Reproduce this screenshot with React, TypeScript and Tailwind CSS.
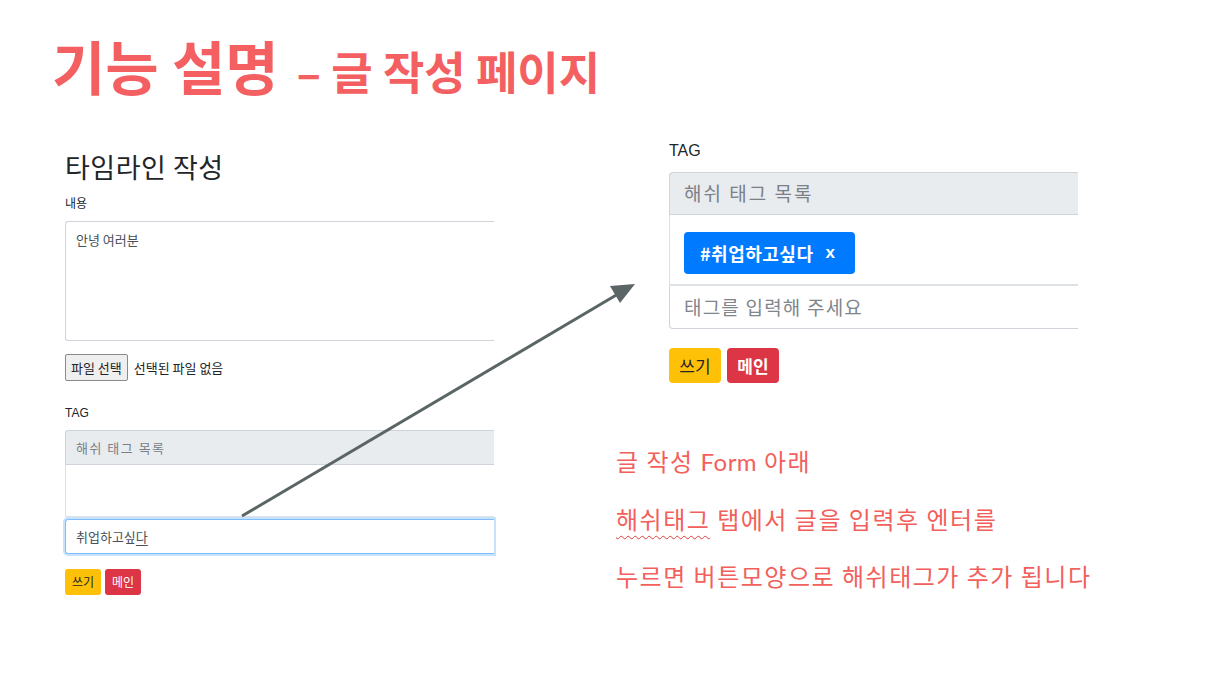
import React from "react";

const kr = "font-['Noto_Sans_CJK_KR','Noto_Sans',sans-serif]";

const Arrow: React.FC = () => (
    <svg
        className="absolute inset-0 pointer-events-none"
        width={1226}
        height={675}
        viewBox="0 0 1226 675"
    >
        <line x1={242} y1={516} x2={618} y2={294} stroke="#5b6566" strokeWidth={3} />
        <polygon points="635,284 610,286 620,303" fill="#5b6566" />
    </svg>
);

const LeftShot: React.FC = () => (
    <div className="w-[429px] mt-[150px] text-[#212529]">
        <div className="text-[27px] leading-[34px] tracking-[0.5px]">타임라인 작성</div>
        <div className="text-[12px] leading-[16px] mt-[11px]">내용</div>
        <div className="mt-[10px] h-[120px] border border-r-0 border-[#ced4da] rounded-l-[3px] px-[10px] py-[8px] text-[13px] text-[#495057]">
            안녕 여러분
        </div>
        <div className="mt-[13px] flex items-center gap-[6px] text-[13px]">
            <span className="h-[27px] px-[5px] flex items-center border border-[#8a8a8a] bg-[#efefef] rounded-[2px]">
                파일 선택
            </span>
            <span>선택된 파일 없음</span>
        </div>
        <div className="mt-[24px] text-[12px] leading-[16px] font-['Liberation_Sans',sans-serif]">TAG</div>
        <div className="mt-[9px] h-[35px] bg-[#e9ecef] border border-r-0 border-[#ced4da] rounded-tl-[3px] flex items-center px-[10px] text-[13px] text-[#7a8086] tracking-[1.5px]">
            해쉬 태그 목록
        </div>
        <div className="h-[52px] border-l border-b border-[#dee2e6]" />
        <div className="mt-[2px] h-[35px] border border-r-0 border-[#80bdff] rounded-l-[3px] shadow-[0_0_0_2px_rgba(0,123,255,0.22)] flex items-center px-[10px] text-[13px] text-[#495057]">
            취업하고싶<span className="underline underline-offset-[3px]">다</span>
        </div>
        <div className="mt-[15px] flex gap-[4px] text-[12px]">
            <span className="h-[26px] w-[36px] flex items-center justify-center rounded-[3px] bg-[#ffc107] text-[#212529]">쓰기</span>
            <span className="h-[26px] w-[36px] flex items-center justify-center rounded-[3px] bg-[#dc3545] text-white">메인</span>
        </div>
    </div>
);

const RightShot: React.FC = () => (
    <div className="ml-[53px] w-[409px] text-[#212529]">
        <div className="text-[16px] leading-[20px] font-['Liberation_Sans',sans-serif]">TAG</div>
        <div className="mt-[11px] h-[43px] bg-[#e9ecef] border border-r-0 border-[#ced4da] rounded-tl-[4px] flex items-center px-[14px] text-[19px] text-[#7a8086] tracking-[2px]">
            해쉬 태그 목록
        </div>
        <div className="h-[71px] border-l border-b-2 border-[#dee2e6] flex items-start pt-[17px] px-[14px]">
            <span className="h-[42px] w-[171px] rounded-[4px] bg-[#007bff] text-white font-bold text-[18px] flex items-center pl-[16px] tracking-[0.5px]">
                #취업하고싶다
                <span className="ml-[12px] text-[17px] font-['Liberation_Sans',sans-serif]">x</span>
            </span>
        </div>
        <div className="h-[43px] border border-t-0 border-r-0 border-[#ced4da] rounded-bl-[4px] flex items-center px-[14px] text-[19px] text-[#7f868c] tracking-[1.2px]">
            태그를 입력해 주세요
        </div>
        <div className="mt-[19px] flex gap-[6px] text-[17px]">
            <span className="h-[35px] w-[52px] flex items-center justify-center rounded-[4px] bg-[#ffc107] text-[#212529]">쓰기</span>
            <span className="h-[35px] w-[52px] flex items-center justify-center rounded-[4px] bg-[#dc3545] text-white font-bold">메인</span>
        </div>
    </div>
);

const Notes: React.FC = () => (
    <div className="mt-[49px] text-[#f25f5c] text-[24px] leading-[57px] tracking-[1.5px]">
        <div>
            글 작성 <span className="font-['Lato',sans-serif] tracking-[0.5px]">Form</span> 아래
        </div>
        <div>
            <span className="underline decoration-wavy decoration-[#e04040] decoration-1 underline-offset-[6px]">해쉬태그</span> 탭에서 글을 입력후 엔터를
        </div>
        <div>누르면 버튼모양으로 해쉬태그가 추가 됩니다</div>
    </div>
);

const App: React.FC = () => {
    return (
        <div className={`relative w-[1226px] h-[675px] bg-white overflow-hidden ${kr}`}>
            <div className="h-[0px]">
                <h1 className="pl-[52px] pt-[36px] flex items-baseline text-[#f45f62] font-bold leading-none">
                    <span className="text-[58px]">기능 설명</span>
                    <span className="ml-[18px] text-[45px]">– 글 작성 페이지</span>
                </h1>
            </div>
            <div className="flex items-start pl-[65px]">
                <LeftShot />
                <div className="ml-[122px] mt-[141px]">
                    <RightShot />
                    <Notes />
                </div>
            </div>
            <Arrow />
        </div>
    );
};

export default App;
